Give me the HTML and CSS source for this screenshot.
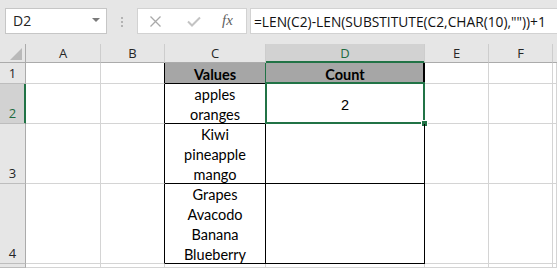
FILE: index.html
```html
<!DOCTYPE html>
<html>
<head>
<meta charset="utf-8">
<link rel="stylesheet" href="styles.css">
</head>
<body>
<div class="app">
  <div class="toolbar">
    <div class="namebox"><span class="name">D2</span><span class="caret"></span></div>
    <div class="grip"><i></i><i></i><i></i></div>
    <div class="fxbox">
      <svg class="ico-x" width="11" height="11" viewBox="0 0 11 11"><path d="M0.5 0.5 L10.5 10.5 M10.5 0.5 L0.5 10.5" stroke="#a9a9a9" stroke-width="1.3" fill="none"/></svg>
      <svg class="ico-ok" width="14" height="11" viewBox="0 0 14 11"><path d="M1 5.5 L5 9.5 L13 1.5" stroke="#c3c3c3" stroke-width="2" fill="none"/></svg>
      <span class="fx">fx</span>
    </div>
    <div class="formula">=LEN(C2)-LEN(SUBSTITUTE(C2,CHAR(10),""))+1</div>
  </div>

  <div class="sheet">
    <div class="corner"><span class="tri"></span></div>
    <div class="ch">A</div>
    <div class="ch">B</div>
    <div class="ch">C</div>
    <div class="ch sel">D</div>
    <div class="ch">E</div>
    <div class="ch">F</div>
    <div class="ch last"></div>

    <div class="rh">1</div>
    <div class="c"></div>
    <div class="c edge"></div>
    <div class="c t head cl"><span class="txt">Values</span></div>
    <div class="c t head dr"><span class="txt">Count</span></div>
    <div class="c"></div>
    <div class="c"></div>
    <div class="c"></div>

    <div class="rh sel">2</div>
    <div class="c"></div>
    <div class="c edge"></div>
    <div class="c t cl"><span class="txt">apples<br>oranges</span></div>
    <div class="c t mid"><span class="num">2</span><span class="selbox"></span><span class="handle"></span></div>
    <div class="c"></div>
    <div class="c"></div>
    <div class="c"></div>

    <div class="rh">3</div>
    <div class="c"></div>
    <div class="c edge"></div>
    <div class="c t"><span class="txt">Kiwi<br>pineapple<br>mango</span></div>
    <div class="c t"></div>
    <div class="c"></div>
    <div class="c"></div>
    <div class="c"></div>

    <div class="rh">4</div>
    <div class="c"></div>
    <div class="c edge"></div>
    <div class="c t"><span class="txt">Grapes<br>Avacodo<br>Banana<br>Blueberry</span></div>
    <div class="c t"></div>
    <div class="c"></div>
    <div class="c"></div>
    <div class="c"></div>

    <div class="rh"></div>
    <div class="c"></div>
    <div class="c"></div>
    <div class="c"></div>
    <div class="c"></div>
    <div class="c"></div>
    <div class="c"></div>
    <div class="c"></div>
  </div>
</div>
</body>
</html>
```

FILE: styles.css
```css
* { box-sizing: border-box; }
html, body { margin: 0; padding: 0; }
body {
  width: 557px;
  height: 268px;
  overflow: hidden;
  background: #e6e6e6;
  font-family: "Open Sans", "Noto Sans", sans-serif;
}
.app { display: flex; flex-direction: column; height: 268px; }

/* toolbar */
.toolbar {
  height: 44px;
  flex: none;
  display: flex;
  align-items: flex-start;
  padding: 8px 0 0 5px;
  background: #e6e6e6;
}
.namebox {
  width: 102px;
  height: 26px;
  background: #fff;
  border: 1px solid #c6c6c6;
  display: flex;
  align-items: center;
  justify-content: space-between;
  padding: 0 6px 0 7px;
}
.name { font-size: 14px; color: #222; line-height: 1; }
.caret {
  width: 0; height: 0;
  border-left: 4px solid transparent;
  border-right: 4px solid transparent;
  border-top: 4px solid #7a7a7a;
  margin-top: -2px;
}
.grip {
  margin-left: 14px;
  margin-top: 9px;
  width: 3px;
  display: flex;
  flex-direction: column;
  gap: 2px;
}
.grip i { display: block; width: 2px; height: 2px; background: #b3b3b3; }
.fxbox {
  margin-left: 13px;
  width: 110px;
  height: 26px;
  background: #fff;
  border: 1px solid #d2d2d2;
  display: flex;
  align-items: center;
  padding-left: 12px;
}
.ico-x { margin-top: 1px; }
.ico-ok { margin-left: 26px; margin-top: 1px; }
.fx {
  margin-left: 21px;
  font-family: "Liberation Serif", serif;
  font-style: italic;
  font-size: 15px;
  color: #5f5f5f;
  margin-top: -2px;
}
.formula {
  margin-left: 3px;
  flex: 1;
  height: 26px;
  background: #fff;
  border: 1px solid #d2d2d2;
  border-right: none;
  padding-left: 3px;
  font-size: 13.75px;
  line-height: 25px;
  color: #111;
  white-space: nowrap;
}

/* sheet */
.sheet {
  flex: 1;
  display: grid;
  grid-template-columns: 26px 75px 64px 101px 159px 64px 64px 1fr;
  grid-template-rows: 19px 21px 40px 60px 80px 1fr;
  background: #fff;
}
.corner {
  background: #e6e6e6;
  border-right: 1px solid #ababab;
  border-bottom: 1px solid #ababab;
  position: relative;
}
.tri {
  position: absolute;
  right: 3px;
  bottom: 2px;
  width: 0; height: 0;
  border-left: 12px solid transparent;
  border-bottom: 12px solid #b9b9b9;
}
.ch {
  background: #e6e6e6;
  border-right: 1px solid #cdcdcd;
  border-bottom: 1px solid #ababab;
  display: flex;
  align-items: center;
  justify-content: center;
  font-size: 13px;
  color: #262626;
}
.ch.sel {
  background: #d2d2d2;
  color: #1e6b40;
  border-bottom-color: #217346;
  box-shadow: inset 0 -1px 0 #217346;
}
.ch.last { border-right: none; }
.rh {
  background: #e6e6e6;
  border-right: 1px solid #ababab;
  border-bottom: 1px solid #bdbdbd;
  display: flex;
  align-items: flex-end;
  justify-content: center;
  font-size: 13px;
  color: #262626;
  line-height: 18px;
  padding-bottom: 1px;
}
.rh.sel {
  background: #d2d2d2;
  color: #1e6b40;
  border-right-color: #217346;
  box-shadow: inset -1px 0 0 #217346;
}
.c {
  border-right: 1px solid #d4d4d4;
  border-bottom: 1px solid #d4d4d4;
  font-family: "Lato", "Open Sans", sans-serif;
  font-size: 14.5px;
  color: #000;
}
.c.edge { border-right-color: #000; }
.c.t {
  border-right-color: #000;
  border-bottom-color: #000;
  display: flex;
  flex-direction: column;
  justify-content: flex-end;
  align-items: center;
  text-align: center;
  line-height: 20px;
  position: relative;
}
.txt { position: relative; top: 2px; }
.c.head {
  background: #a6a6a6;
  font-weight: bold;
}
.c.head .txt { top: 2px; }
.c.cl { border-right-color: #217346; }
.c.dr { box-shadow: inset -1px 0 0 #000; }
.c.mid {
  justify-content: center;
  font-family: "Liberation Sans", Arial, sans-serif;
  font-size: 14.5px;
}
.num { position: relative; top: 1px; }
.selbox {
  position: absolute;
  left: -1px;
  top: -2px;
  width: 160px;
  height: 42px;
  border: 2px solid #217346;
  pointer-events: none;
}
.handle {
  position: absolute;
  left: 155px;
  top: 36px;
  width: 7px;
  height: 7px;
  background: #217346;
  border: 1px solid #fff;
}
```
